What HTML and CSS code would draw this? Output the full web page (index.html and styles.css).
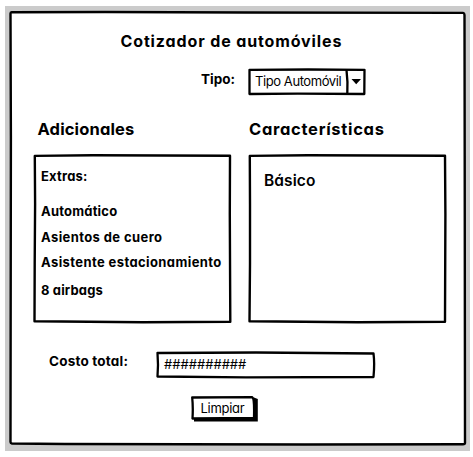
FILE: index.html
```html
<!DOCTYPE html>
<html lang="es">
<head>
<meta charset="utf-8">
<title>Cotizador de automóviles</title>
<link rel="stylesheet" href="styles.css">
</head>
<body>
<main class="window">
  <svg class="sketch" viewBox="0 0 465 445" aria-hidden="true"><path class="fill" d="M6.500 6.200L100 6L240 6.500L458 6.900Q459.500 7.200 459.500 9L459.700 150L460 437Q460 438.200 458 438.200L300 438.500L60 438L7 437.500Q5.500 437.200 5.500 436L5.900 130L5.500 7.500Q5.500 6.200 6.500 6.200Z"/></svg>
  <h1 class="title"><span>Cotizador de automóviles</span></h1>
  <div class="type-row">
    <label class="label">Tipo:</label>
    <div class="combo">
      <svg class="sketch" viewBox="0 0 118 28" aria-hidden="true"><path class="fill thin" d="M1.500 1.800L60 1.500L116.500 1.800L116.300 26L50 25.700L1.500 26Z"/><path class="thin" d="M98.500 2Q100 14 99.300 26"/><path class="arrow" d="M103.500 11L113 11L108.200 16.200Z"/></svg>
      <span class="combo-text">Tipo Automóvil</span>
    </div>
  </div>
  <div class="columns">
    <section class="col">
      <h2 class="heading h-left">Adicionales</h2>
      <div class="panel">
        <svg class="sketch" viewBox="0 0 199 170" aria-hidden="true"><path class="fill" d="M1.800 1.900L60 1.300L197 1.800L196.800 60L197.300 167.700L110 168.300L1.500 167.300L1.700 110L2.100 50Z"/></svg>
        <p class="extras">Extras:</p>
        <ul class="list">
          <li class="i1">Automático</li>
          <li class="i2">Asientos de cuero</li>
          <li class="i3">Asistente estacionamiento</li>
          <li class="i4">8 airbags</li>
        </ul>
      </div>
    </section>
    <section class="col">
      <h2 class="heading h-right">Características</h2>
      <div class="panel">
        <svg class="sketch" viewBox="0 0 199 170" aria-hidden="true"><path class="fill" d="M1.800 1.900L60 1.300L197 1.800L197.400 60L197 167.700L110 168.300L1.500 167.300L2 110L2 50Z"/></svg>
        <p class="basic">Básico</p>
      </div>
    </section>
  </div>
  <div class="total-row">
    <label class="label total">Costo total:</label>
    <div class="field">
      <svg class="sketch" viewBox="0 0 221 28" aria-hidden="true"><path class="fill thin" d="M1.500 2L100 1.500L217.500 2.500Q218.800 12 217.500 26L90 26.300L1.500 25.500Q2.500 14 1.500 2Z"/></svg>
      <span class="hashes">##########</span>
    </div>
  </div>
  <div class="actions">
    <div class="button">
      <svg class="sketch" viewBox="0 0 68 28" aria-hidden="true"><path class="shadow" d="M3 5L63 2.500L66.800 4V26.500H3Z"/><path class="fill thin" d="M1.200 2.500L61 2.200Q63.500 3 63 22.800L1.500 23.500Q2.200 12 1.200 2.500Z"/></svg>
      <span class="button-text">Limpiar</span>
    </div>
  </div>
</main>
</body>
</html>
```

FILE: styles.css
```css
* { box-sizing: border-box; }
body {
  margin: 0;
  padding: 6px 3px 6px 5px;
  background: #fff;
  color: #000;
  font-family: Inter, "Liberation Sans", sans-serif;
  font-feature-settings: "cv11";
}
h1, h2, p, ul { margin: 0; padding: 0; list-style: none; }
h1, h2, p, li, label, span { white-space: nowrap; }
.window {
  position: relative;
  display: flex;
  flex-direction: column;
  width: 465px;
  height: 445px;
  padding: 25px 23px 0 28px;
  background: #cbcbcb;
}
.window > :not(.sketch) { position: relative; }
.sketch { position: absolute; left: 0; top: 0; width: 100%; height: 100%; }
.sketch path { fill: none; stroke: #000; stroke-width: 2.4; stroke-linejoin: round; }
.sketch .fill { fill: #fff; }
.sketch .thin { stroke-width: 2.3; }
.sketch path.arrow { fill: #000; stroke: none; }
.sketch path.shadow { fill: #000; stroke: none; }
.title {
  height: 20px;
  padding-left: 87.500px;
  font-size: 16px;
  line-height: 20px;
  font-weight: 700;
  letter-spacing: .87px;
}
.type-row { display: flex; gap: 13px; height: 28px; margin-top: 17px; padding-left: 168px; }
.label { width: 34px; font-size: 13.500px; font-weight: 700; line-height: 22px; }
.combo { position: relative; width: 118px; height: 28px; }
.combo-text { position: relative; display: block; padding-left: 7px; font-size: 13px; line-height: 26px; letter-spacing: -.42px; }
.columns { display: flex; gap: 16px; margin-top: 22px; }
.col { width: 199px; }
.heading { height: 36px; font-size: 16.500px; line-height: 22px; font-weight: 700; letter-spacing: .15px; }
.h-left { padding-left: 4.500px; }
.h-right { padding-left: 1px; letter-spacing: .7px; }
.panel { position: relative; width: 199px; height: 170px; padding: 12px 8px; }
.panel p, .list { position: relative; }
.extras, .list { font-size: 13px; line-height: 20px; font-weight: 700; }
.extras { letter-spacing: .2px; }
.list { margin-top: 15px; }
.i1 { letter-spacing: .2px; }
.i2 { margin-top: 6px; letter-spacing: .4px; }
.i3 { margin-top: 5px; letter-spacing: .4px; }
.i4 { margin-top: 8px; letter-spacing: .15px; }
.panel .basic { padding: 5px 0 0 8px; font-size: 15.500px; line-height: 20px; font-weight: 600; letter-spacing: .1px; }
.total-row { display: flex; height: 28px; margin-top: 27px; padding-left: 16px; }
.total { width: 107px; line-height: 21px; letter-spacing: .2px; }
.field { position: relative; width: 221px; height: 28px; }
.hashes { position: relative; display: block; padding-left: 8px; font-size: 13px; line-height: 26px; }
.actions { margin-top: 16px; padding-left: 158px; }
.button { position: relative; width: 68px; height: 28px; }
.button-text { position: relative; display: block; padding-left: 9.500px; font-size: 13px; line-height: 26px; letter-spacing: -.3px; }
```
